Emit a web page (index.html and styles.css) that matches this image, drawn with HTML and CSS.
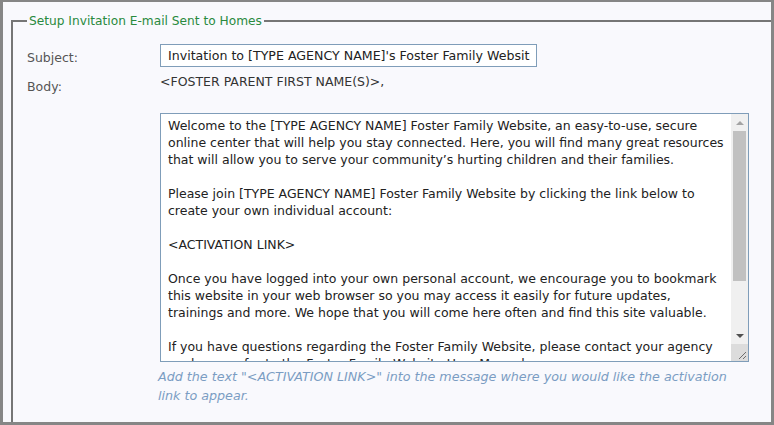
FILE: index.html
```html
<!DOCTYPE html>
<html>
<head>
<meta charset="utf-8">
<link rel="stylesheet" href="styles.css">
</head>
<body>
<div class="window">
  <fieldset class="group">
    <legend class="group-title">Setup Invitation E-mail Sent to Homes</legend>
    <div class="form">
      <div class="label">Subject:</div>
      <div class="field"><input class="subject" type="text" value="Invitation to [TYPE AGENCY NAME]'s Foster Family Website"></div>
      <div class="label">Body:</div>
      <div class="field">
        <div class="salutation">&lt;FOSTER PARENT FIRST NAME(S)&gt;,</div>
        <div class="textarea">
          <div class="ta-text">Welcome to the [TYPE AGENCY NAME] Foster Family Website, an easy-to-use, secure
online center that will help you stay connected. Here, you will find many great resources
that will allow you to serve your community’s hurting children and their families.

Please join [TYPE AGENCY NAME] Foster Family Website by clicking the link below to
create your own individual account:

&lt;ACTIVATION LINK&gt;

Once you have logged into your own personal account, we encourage you to bookmark
this website in your web browser so you may access it easily for future updates,
trainings and more. We hope that you will come here often and find this site valuable.

If you have questions regarding the Foster Family Website, please contact your agency
worker or refer to the Foster Family Website User Manual.</div>
          <div class="ta-scroll">
            <div class="sb-btn"><span class="arrow-up"></span></div>
            <div class="sb-track"><div class="sb-thumb"></div></div>
            <div class="sb-btn"><span class="arrow-down"></span></div>
            <div class="sb-grip">
              <svg width="17" height="17" viewBox="0 0 17 17"><path d="M15 8 L8 15 M15 12 L12 15" stroke="#6e6e6e" stroke-width="1" fill="none"/></svg>
            </div>
          </div>
        </div>
        <div class="hint">Add the text "&lt;ACTIVATION LINK&gt;" into the message where you would like the activation<br>link to appear.</div>
      </div>
    </div>
  </fieldset>
</div>
</body>
</html>
```
FILE: styles.css
```css
html, body {
  margin: 0;
  padding: 0;
}
body {
  font-family: "DejaVu Sans", Verdana, sans-serif;
  font-size: 12.5px;
  color: #222;
  background: #f9f9fd;
}
.window {
  height: 425px;
  box-sizing: border-box;
  border: 3px solid #868686;
  border-top-width: 2px;
  background: #f9f9fd;
  overflow: hidden;
  padding: 11px 0 0 8px;
}
.group {
  margin: 0 -30px 0 0;
  border: 2px solid #767676;
  padding: 15px 0 40px 14px;
  min-width: 0;
}
.group-title {
  color: #2a8a3e;
  font-size: 12.2px;
  line-height: 16px;
  padding: 0 2px;
}
.form {
  display: grid;
  grid-template-columns: 133px 1fr;
  row-gap: 6px;
}
.label {
  color: #555;
  line-height: 17px;
  padding-top: 5px;
}
.subject {
  display: block;
  width: 377px;
  height: 23px;
  box-sizing: border-box;
  border: 1px solid #7f9db9;
  padding: 0 6px 0 7px;
  margin: 0;
  font: inherit;
  font-size: 12.6px;
  color: #222;
  background: #fff;
  outline: none;
}
.salutation {
  line-height: 17px;
  color: #333;
  margin-bottom: 23px;
}
.textarea {
  display: flex;
  width: 589px;
  height: 249px;
  box-sizing: border-box;
  border: 1px solid #7f9db9;
  background: #fff;
}
.ta-text {
  flex: 1;
  overflow: hidden;
  white-space: pre;
  line-height: 17px;
  padding: 3px 0 0 7px;
  color: #222;
}
.ta-scroll {
  width: 17px;
  display: flex;
  flex-direction: column;
  background: #f0f0f0;
}
.sb-btn {
  height: 17px;
  display: flex;
  align-items: center;
  justify-content: center;
}
.arrow-up {
  width: 0;
  height: 0;
  border-left: 4px solid transparent;
  border-right: 4px solid transparent;
  border-bottom: 4px solid #a3a3a3;
}
.arrow-down {
  width: 0;
  height: 0;
  border-left: 4px solid transparent;
  border-right: 4px solid transparent;
  border-top: 4px solid #505050;
}
.sb-track {
  flex: 1;
  padding: 0 2px;
}
.sb-thumb {
  height: 150px;
  background: #c1c1c1;
}
.sb-grip {
  height: 17px;
  background: #dcdcdc;
}
.sb-grip svg {
  display: block;
}
.hint {
  margin: 5px 0 0 -2px;
  font-style: italic;
  font-size: 12.7px;
  color: #7b9dc3;
  line-height: 19px;
}
```
